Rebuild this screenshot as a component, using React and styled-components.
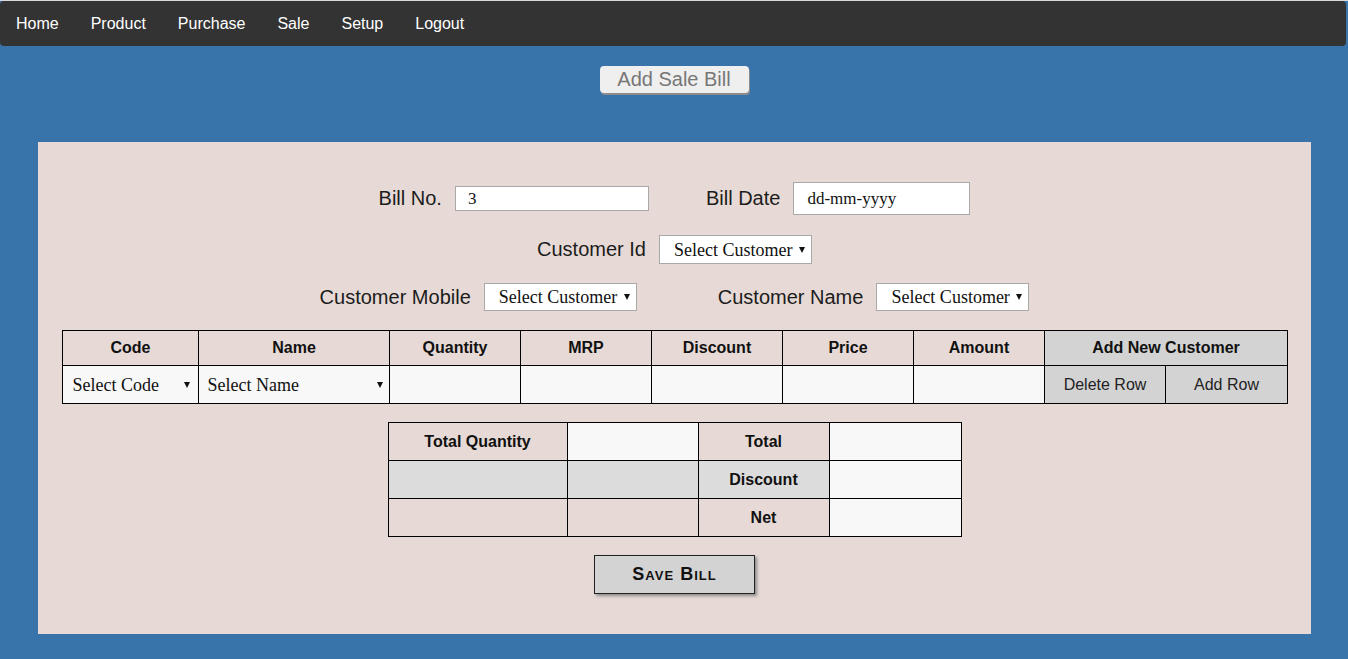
import React from 'react'
import styled, { createGlobalStyle } from 'styled-components'

const GlobalStyle = createGlobalStyle`
  html {
    background: #3873aa;
  }
  body {
    margin: 0;
    border-top: 1px solid #d9d9d9;
    font-family: "Liberation Sans", Arial, sans-serif;
  }
`

const Nav = styled.nav`
  display: flex;
  align-items: center;
  height: 45px;
  margin-right: 2px;
  background: #333333;
  border-radius: 4px;
`

const NavLink = styled.a`
  padding: 0 16px;
  color: #ffffff;
  font-size: 16px;
  text-decoration: none;
`

const TitleBar = styled.div`
  display: flex;
  justify-content: center;
  padding: 20px 0 49px;
`

const TitleButton = styled.button`
  width: 149px;
  height: 27px;
  padding: 0;
  border: none;
  border-radius: 4px;
  background: #efefef;
  box-shadow: 1px 2px 0 #8c8c8c;
  color: #777777;
  font-family: "Liberation Sans", Arial, sans-serif;
  font-size: 20px;
  line-height: 27px;
`

const Panel = styled.main`
  height: 452px;
  margin: 0 37px 0 38px;
  padding-top: 40px;
  background: #e7dad6;
`

const FormRow = styled.div`
  display: flex;
  justify-content: center;
  align-items: center;
  gap: ${p => p.gap || 0}px;
  margin-bottom: ${p => p.mb || 19}px;
`

const Field = styled.div`
  display: flex;
  align-items: center;
  gap: 13px;
`

const Label = styled.label`
  color: #1c1c1c;
  font-size: 20px;
`

const TextInput = styled.input`
  box-sizing: border-box;
  width: ${p => p.w}px;
  height: ${p => p.h}px;
  padding: 0 0 0 ${p => p.pl || 12}px;
  border: 1px solid #a9a9a9;
  background: #ffffff;
  color: #111;
  font-family: "Liberation Serif", "Times New Roman", serif;
  font-size: 17px;
  outline: none;

  &::placeholder {
    color: #111;
    opacity: 1;
  }
`

const SelectWrap = styled.span`
  position: relative;
  display: inline-block;
  width: ${p => p.w || 153}px;
  height: ${p => p.h || 29}px;
  box-sizing: border-box;
  border: ${p => (p.bare ? 'none' : '1px solid #a9a9a9')};
  background: ${p => (p.bare ? 'transparent' : '#ffffff')};

  &::after {
    content: '';
    position: absolute;
    right: ${p => p.ar || 6}px;
    top: 50%;
    margin-top: -3px;
    border-left: 3px solid transparent;
    border-right: 3px solid transparent;
    border-top: 6px solid #111;
    pointer-events: none;
  }
`

const Select = styled.select`
  appearance: none;
  width: 100%;
  height: 100%;
  padding: 0 0 0 ${p => p.pl || 14}px;
  border: none;
  background: transparent;
  color: #111;
  font-family: "Liberation Serif", "Times New Roman", serif;
  font-size: 18px;
  outline: none;
`

const Grid = styled.table`
  border-collapse: collapse;
  table-layout: fixed;
  margin: ${p => p.m};
  width: ${p => p.w}px;
`

const Th = styled.th`
  box-sizing: border-box;
  height: ${p => p.h || 35}px;
  padding: 0;
  border: 1px solid #000;
  background: ${p => p.bg || '#e7dad6'};
  color: #111;
  font-size: 16px;
  font-weight: bold;
  text-align: center;
`

const Td = styled.td`
  box-sizing: border-box;
  height: ${p => p.h || 38}px;
  padding: 0;
  border: 1px solid #000;
  background: ${p => p.bg || '#f8f8f8'};
  color: #222;
  font-size: 16px;
  text-align: center;
`

const SaveWrap = styled.div`
  display: flex;
  justify-content: center;
  margin-top: 18px;
`

const SaveButton = styled.button`
  width: 161px;
  height: 39px;
  border: 1px solid #222;
  background: #d3d3d3;
  box-shadow: 2px 2px 3px #8a8a8a;
  color: #111;
  font-family: "Liberation Sans", Arial, sans-serif;
  font-size: 18px;
  font-weight: bold;
  font-variant: small-caps;
  letter-spacing: 1px;
`

const navItems = ['Home', 'Product', 'Purchase', 'Sale', 'Setup', 'Logout']
const itemCols = [136, 191, 131, 131, 131, 131, 131, 121, 122]
const itemHeads = ['Code', 'Name', 'Quantity', 'MRP', 'Discount', 'Price', 'Amount']

export default function App() {
  return (
    <>
      <GlobalStyle />
      <Nav>
        {navItems.map(n => (
          <NavLink key={n} href="#">{n}</NavLink>
        ))}
      </Nav>
      <TitleBar>
        <TitleButton>Add Sale Bill</TitleButton>
      </TitleBar>
      <Panel>
        <FormRow gap={57} mb={20}>
          <Field>
            <Label>Bill No.</Label>
            <TextInput w={194} h={25} defaultValue="3" />
          </Field>
          <Field>
            <Label>Bill Date</Label>
            <TextInput w={177} h={33} pl={13} placeholder="dd-mm-yyyy" />
          </Field>
        </FormRow>
        <FormRow>
          <Field>
            <Label>Customer Id</Label>
            <SelectWrap>
              <Select><option>Select Customer</option></Select>
            </SelectWrap>
          </Field>
        </FormRow>
        <FormRow gap={81}>
          <Field>
            <Label>Customer Mobile</Label>
            <SelectWrap h={28}>
              <Select><option>Select Customer</option></Select>
            </SelectWrap>
          </Field>
          <Field>
            <Label>Customer Name</Label>
            <SelectWrap h={28}>
              <Select><option>Select Customer</option></Select>
            </SelectWrap>
          </Field>
        </FormRow>

        <Grid w={1225} m="0 24px">
          <colgroup>
            {itemCols.map((w, i) => <col key={i} style={{ width: w }} />)}
          </colgroup>
          <thead>
            <tr>
              {itemHeads.map(h => <Th key={h}>{h}</Th>)}
              <Th colSpan={2} bg="#d3d3d3">Add New Customer</Th>
            </tr>
          </thead>
          <tbody>
            <tr>
              <Td>
                <SelectWrap bare w={134} h={36} ar={8}>
                  <Select pl={9}><option>Select Code</option></Select>
                </SelectWrap>
              </Td>
              <Td>
                <SelectWrap bare w={189} h={36} ar={6}>
                  <Select pl={8}><option>Select Name</option></Select>
                </SelectWrap>
              </Td>
              <Td />
              <Td />
              <Td />
              <Td />
              <Td />
              <Td bg="#d3d3d3">Delete Row</Td>
              <Td bg="#d3d3d3">Add Row</Td>
            </tr>
          </tbody>
        </Grid>

        <Grid w={573} m="18px auto 0">
          <colgroup>
            <col style={{ width: 179 }} />
            <col style={{ width: 131 }} />
            <col style={{ width: 131 }} />
            <col style={{ width: 132 }} />
          </colgroup>
          <tbody>
            <tr>
              <Th h={38}>Total Quantity</Th>
              <Td />
              <Th h={38}>Total</Th>
              <Td />
            </tr>
            <tr>
              <Td bg="#dcdcdc" />
              <Td bg="#dcdcdc" />
              <Th h={38} bg="#dcdcdc">Discount</Th>
              <Td />
            </tr>
            <tr>
              <Td bg="#e7dad6" />
              <Td bg="#e7dad6" />
              <Th h={38}>Net</Th>
              <Td />
            </tr>
          </tbody>
        </Grid>

        <SaveWrap>
          <SaveButton>Save Bill</SaveButton>
        </SaveWrap>
      </Panel>
    </>
  )
}
